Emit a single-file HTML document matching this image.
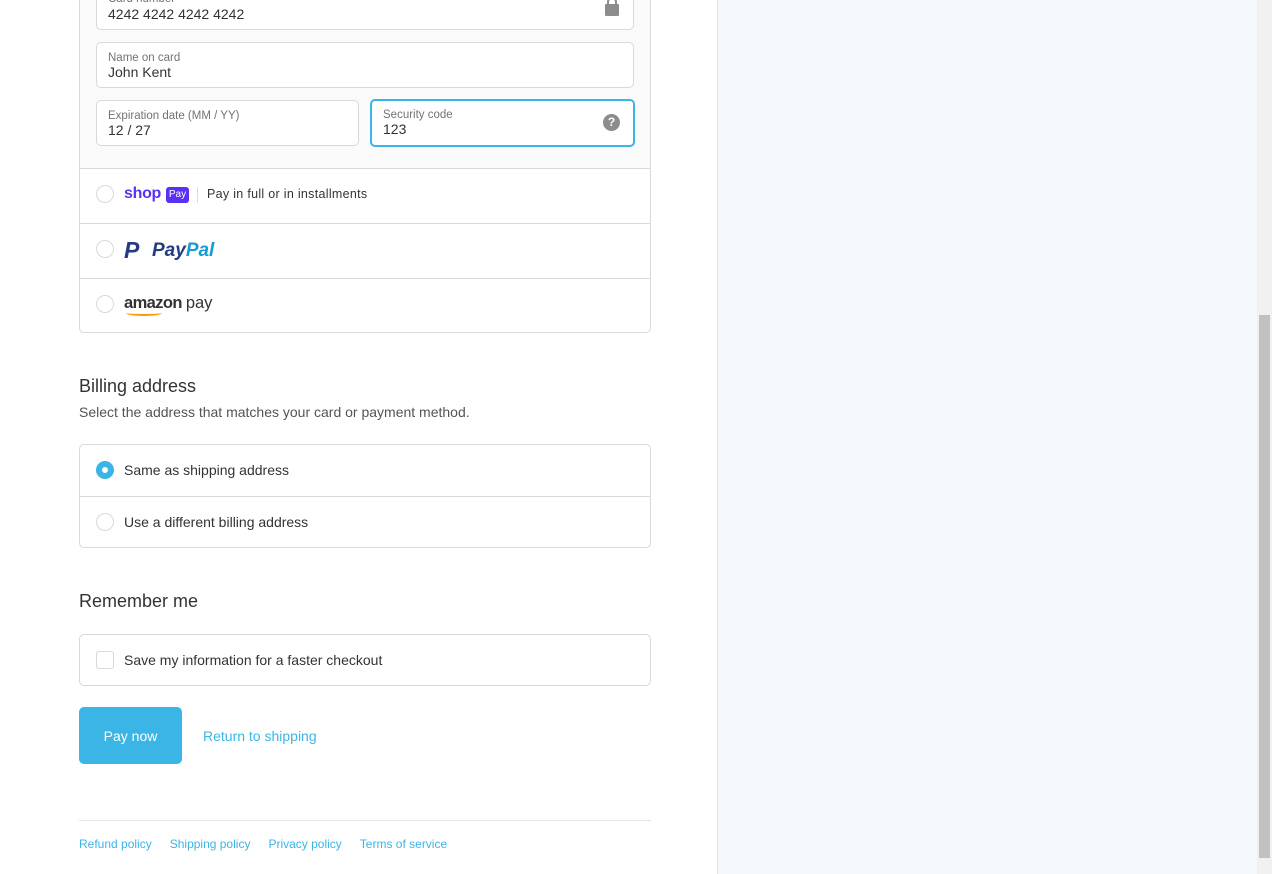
<!DOCTYPE html>
<html><head><meta charset="utf-8"><style>
*{box-sizing:border-box;margin:0;padding:0}
body{width:1272px;height:874px;overflow:hidden;font-family:"Liberation Sans",sans-serif;background:#fff;position:relative;color:#333}
.right{position:absolute;left:717px;top:0;width:540px;height:874px;background:#f5f9fc;border-left:1px solid #e1e1e1}
.sb{position:absolute;left:1257px;top:0;width:15px;height:874px;background:#f1f1f1}
.thumb{position:absolute;left:2px;top:315px;width:11px;height:543px;background:#c1c1c1}
.box{position:absolute;left:79px;width:572px;border:1px solid #d9d9d9;border-radius:5px;background:#fff}
.field{position:absolute;background:#fff;border:1px solid #d9d9d9;border-radius:5px}
.field .l{position:absolute;left:11px;top:9px;font-size:11.5px;color:#737373}
.field .v{position:absolute;left:11px;top:21px;font-size:14px;color:#333}
.row{position:absolute;left:0;width:570px;border-top:1px solid #d9d9d9}
.radio{position:absolute;left:16px;width:18px;height:18px;border:1px solid #d9d9d9;border-radius:50%;background:#fff}
.t{position:absolute;font-size:14px;color:#333}
a{color:#3ab5e6;text-decoration:none}
</style></head><body>
<div class="box" style="top:-12px;height:345px;overflow:hidden">
 <div style="position:absolute;left:0;top:0;width:570px;height:179px;background:#fafafa"></div>
 <div class="field" style="left:16px;top:0;width:538px;height:41px"><div class="l" style="top:3px">Card number</div><div class="v" style="top:16px">4242 4242 4242 4242</div>
  <div style="position:absolute;right:16px;top:7px;width:10px;height:9px;border:2px solid #8c8c8c;border-bottom:none;border-radius:5px 5px 0 0"></div>
  <div style="position:absolute;right:14px;top:14px;width:14px;height:12px;background:#8c8c8c;border-radius:1px"></div></div>
 <div class="field" style="left:16px;top:53px;width:538px;height:46px"><div class="l">Name on card</div><div class="v">John Kent</div></div>
 <div class="field" style="left:16px;top:111px;width:263px;height:46px"><div class="l">Expiration date (MM / YY)</div><div class="v">12 / 27</div></div>
 <div class="field" style="left:290px;top:110px;width:265px;height:48px;border:2px solid #3ab5e6"><div class="l" style="left:11px;top:8px">Security code</div><div class="v" style="top:20px">123</div>
  <div style="position:absolute;right:13px;top:13px;width:17px;height:17px;border-radius:50%;background:#8c8c8c;color:#fff;font-size:12px;font-weight:bold;text-align:center;line-height:17px">?</div></div>
 <div class="row" style="top:179px;height:55px">
  <div class="radio" style="top:16px"></div>
  <div style="position:absolute;left:44px;top:16px;font-size:16px;font-weight:bold;color:#5a31f4;letter-spacing:-0.3px">shop</div>
  <div style="position:absolute;left:86px;top:18px;width:23px;height:16px;background:#5a31f4;border-radius:3px;color:#fff;font-size:10px;text-align:center;line-height:16px">Pay</div>
  <div style="position:absolute;left:117px;top:18px;width:1px;height:16px;background:#ddd"></div>
  <div class="t" style="left:127px;top:18px;font-size:12.5px;letter-spacing:0.3px">Pay in full or in installments</div>
 </div>
 <div class="row" style="top:234px;height:55px">
  <div class="radio" style="top:16px"></div>
  <div style="position:absolute;left:44px;top:13px;font-size:23px;font-weight:bold;font-style:italic;color:#253b80">P</div>
  <div style="position:absolute;left:72px;top:16px;font-size:19px;font-weight:bold;font-style:italic;color:#253b80">Pay<span style="color:#179bd7">Pal</span></div>
 </div>
 <div class="row" style="top:289px;height:56px">
  <div class="radio" style="top:16px"></div>
  <div style="position:absolute;left:44px;top:15px;font-size:16.5px;font-weight:bold;color:#333;letter-spacing:-0.6px">amazon <span style="font-weight:normal;letter-spacing:0">pay</span></div>
  <div style="position:absolute;left:46px;top:31px;width:36px;height:6px;border-bottom:2px solid #f90;border-radius:0 0 50% 50%"></div>
 </div>
</div>
<div class="t" style="left:79px;top:376px;font-size:18px">Billing address</div>
<div class="t" style="left:79px;top:404px;font-size:14px;color:#545454">Select the address that matches your card or payment method.</div>
<div class="box" style="top:444px;height:104px">
 <div class="radio" style="top:16px;border:6px solid #3ab5e6"><div style="position:absolute;left:1px;top:1px;width:4px;height:4px;border-radius:50%;background:#fff"></div></div>
 <div class="t" style="left:44px;top:17px">Same as shipping address</div>
 <div class="row" style="top:51px;height:52px"><div class="radio" style="top:16px"></div><div class="t" style="left:44px;top:17px">Use a different billing address</div></div>
</div>
<div class="t" style="left:79px;top:591px;font-size:18px">Remember me</div>
<div class="box" style="top:634px;height:52px">
 <div style="position:absolute;left:16px;top:16px;width:18px;height:18px;border:1px solid #d9d9d9;border-radius:3px"></div>
 <div class="t" style="left:44px;top:17px">Save my information for a faster checkout</div>
</div>
<div style="position:absolute;left:79px;top:707px;width:103px;height:57px;background:#3ab5e6;border-radius:5px;color:#fff;font-size:14px;text-align:center;line-height:59px">Pay now</div>
<div style="position:absolute;left:203px;top:728px;font-size:14px"><a>Return to shipping</a></div>
<div style="position:absolute;left:79px;top:820px;width:572px;height:1px;background:#e6e6e6"></div>
<div style="position:absolute;left:79px;top:837px;font-size:12px"><a>Refund policy</a><a style="margin-left:18px">Shipping policy</a><a style="margin-left:18px">Privacy policy</a><a style="margin-left:18px">Terms of service</a></div>
<div class="right"></div>
<div class="sb"><div class="thumb"></div></div>
</body></html>
